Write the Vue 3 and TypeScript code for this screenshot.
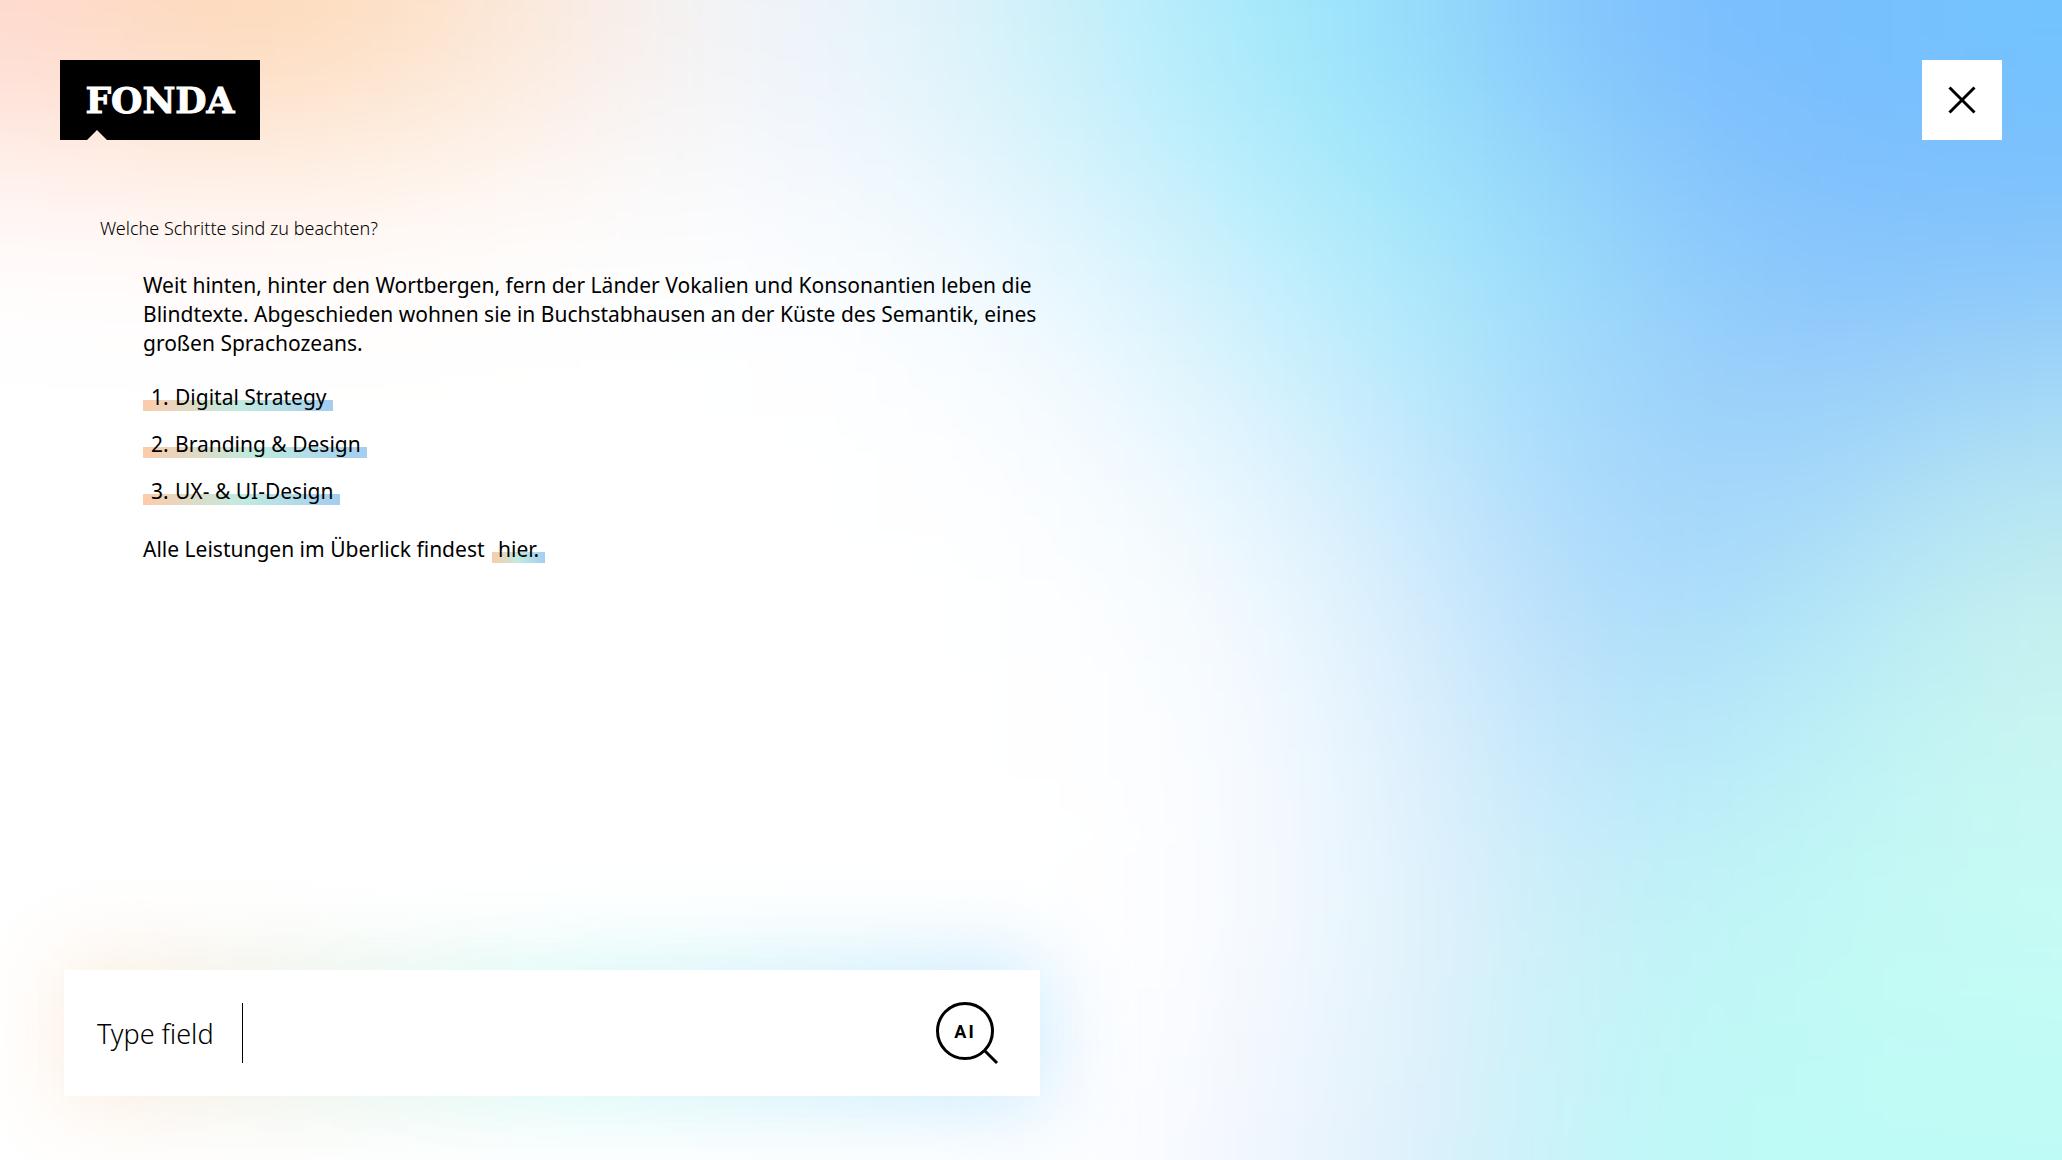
<script setup lang="ts">
import { ref } from 'vue'

const services: string[] = ['Digital Strategy', 'Branding & Design', 'UX- & UI-Design']
const query = ref<string>('')

// Colour field behind the page: one row of swatches per band, blurred together.
const w = 'ffffff'
const mesh: string[][] = [
  ['fed9cd', 'fdd8b8', 'fddbbb', 'fce3cd', 'fbebe2', 'f2f3f7', 'ecf4fc', 'dcf2f9', 'c3f0fb', 'abeafb', '9ae5fb', '90d2fb', '81c2fd', '79bdfe', '76c0fe', '72c3fe'],
  ['fff8f7', 'fff5f3', 'fff6f2', 'fff9f6', 'fdfbfb', 'f9fbfe', 'f6fafe', 'ebf7fd', 'd8f3fd', 'bff0fc', 'a7ebfb', '9de1fb', '91d1fb', '86c3fc', '7fbffd', '7dbffd'],
  [w, w, w, w, w, w, 'fdfeff', 'f8fcff', 'ebf7fe', 'd3f1fd', 'bbeefc', 'a6e5fb', '9bd7fb', '92cbfb', '91cafb', '95cdf9'],
  [w, w, w, w, w, w, w, 'fdfeff', 'f7fbff', 'e6f6fe', 'cfedfd', 'b5e2fc', 'a5d6fb', '9ed2fa', 'a3d6f9', 'b0e1f5'],
  [w, w, w, w, w, w, w, w, 'fcfeff', 'f5fafe', 'e0f2fd', 'c4e5fc', 'abd9fb', 'a8dbfa', 'b6e6f7', 'c5efee'],
  [w, w, w, w, w, w, w, w, 'fefeff', 'f9fcff', 'e8f4fe', 'cfeafb', 'b7e2fa', 'b5e8f9', 'bff2f5', 'c9f5f1'],
  [w, w, w, w, w, w, w, w, w, 'fbfdff', 'ebf6fe', 'd5edfb', 'c0ebfa', 'bef2f7', 'c2f8f5', 'c8f9f3'],
  [w, w, w, w, w, w, w, w, w, 'fafbff', 'eaf5fd', 'd8f0fa', 'c5f2f8', 'c0f8f6', 'c2faf5', 'c5fbf5'],
  [w, w, w, w, w, w, w, w, 'fdfeff', 'f5f8ff', 'e7f2fd', 'd3effa', 'c0f6f8', 'bdfaf6', 'bffbf6', 'bffbf6'],
]
const last = { row: mesh.length - 1, col: 15 }
const swatches = Array.from({ length: 13 * 20 }, (_, i) => {
  const x = (i % 20) - 2
  const y = Math.floor(i / 20) - 2
  const row = Math.min(Math.max(y, 0), last.row)
  const col = Math.min(Math.max(x, 0), last.col)
  return { x, y, fill: '#' + mesh[row][col] }
})
</script>

<template>
  <div class="page">
    <svg class="backdrop" viewBox="0 0 16 9" preserveAspectRatio="none" aria-hidden="true">
      <defs>
        <filter id="melt" filterUnits="userSpaceOnUse" x="-2" y="-2" width="20" height="13" color-interpolation-filters="sRGB">
          <feGaussianBlur stdDeviation="0.68" />
        </filter>
      </defs>
      <g filter="url(#melt)">
        <rect v-for="s in swatches" :key="`${s.x}:${s.y}`" :x="s.x" :y="s.y" width="1.02" height="1.02" :fill="s.fill" />
      </g>
    </svg>

    <header class="top">
      <a class="logo" href="#">FONDA</a>
      <button class="close" type="button" aria-label="Schließen">
        <svg width="28" height="28" viewBox="0 0 28 28" aria-hidden="true">
          <path d="M1.5 1.5L26.5 26.5M26.5 1.5L1.5 26.5" stroke="#000" stroke-width="3" />
        </svg>
      </button>
    </header>

    <main class="chat">
      <p class="question">Welche Schritte sind zu beachten?</p>
      <div class="answer">
        <p>Weit hinten, hinter den Wortbergen, fern der Länder Vokalien und Konsonantien leben die Blindtexte. Abgeschieden wohnen sie in Buchstabhausen an der Küste des Semantik, eines großen Sprachozeans.</p>
        <ol class="services">
          <li v-for="(name, i) in services" :key="name">
            <span class="mark item"><span class="num">{{ i + 1 }}.</span>{{ name }}</span>
          </li>
        </ol>
        <p>Alle Leistungen im Überlick findest <a class="mark link" href="#">hier.</a></p>
      </div>
    </main>

    <form class="ask" @submit.prevent>
      <label for="query">Type field</label>
      <input id="query" v-model="query" type="text" autocomplete="off" />
      <button class="send" type="submit" aria-label="AI-Suche">
        <svg width="64" height="64" viewBox="0 0 64 64" aria-hidden="true">
          <circle cx="30" cy="30" r="27.5" fill="none" stroke="#000" stroke-width="3" />
          <path d="M49.5 49.5L62 62" stroke="#000" stroke-width="3" />
          <text x="30" y="37" text-anchor="middle">AI</text>
        </svg>
      </button>
    </form>
  </div>
</template>

<style>
body {
  margin: 0;
}
</style>

<style scoped>
.page {
  position: relative;
  isolation: isolate;
  display: flex;
  flex-direction: column;
  min-height: 100vh;
  box-sizing: border-box;
  padding: 60px 60px 64px;
  overflow: hidden;
  color: #000;
  font-family: "Noto Sans", "Open Sans", sans-serif;
}

.backdrop {
  position: absolute;
  inset: 0;
  z-index: -2;
  width: 100%;
  height: 100%;
}

.top {
  display: flex;
  justify-content: space-between;
}

.logo {
  display: flex;
  align-items: center;
  justify-content: center;
  width: 200px;
  height: 80px;
  background: #000;
  color: #fff;
  font: 700 36px/80px "DejaVu Serif", serif;
  -webkit-text-stroke: 1px #fff;
  text-decoration: none;
  clip-path: polygon(0 0, 100% 0, 100% 100%, 47px 100%, 37px 70px, 27px 100%, 0 100%);
}

.close {
  display: flex;
  align-items: center;
  justify-content: center;
  width: 80px;
  height: 80px;
  padding: 0;
  border: 0;
  background: #fff;
}

.chat {
  width: calc(50% + 20px);
  padding: 76px 0 76px 40px;
  box-sizing: border-box;
}

p {
  margin: 0;
}

.question {
  font-size: 18px;
  font-weight: 300;
  line-height: 24px;
}

.answer {
  margin: 31px 0 0 43px;
  font-size: 21px;
  line-height: 29px;
}

.services {
  display: flex;
  flex-direction: column;
  gap: 18px;
  margin: 25px 0 29px;
  padding: 0;
  list-style: none;
}

.mark {
  background: linear-gradient(90deg, #fccbab, #c0ebe0 50%, #a5cdf0) 0 100% / 100% 11px no-repeat;
  color: inherit;
  text-decoration: none;
}

.item {
  display: inline-block;
  padding: 0 6px 0 8px;
  background-position: 0 17px;
}

.num {
  display: inline-block;
  width: 24px;
}

.link {
  margin-left: 2px;
  padding: 0 6px;
}

.ask {
  position: relative;
  display: flex;
  align-items: center;
  width: calc(50% + 5px);
  height: 126px;
  margin: auto 0 0 4px;
  padding: 0 41px 0 33px;
  box-sizing: border-box;
  background: #fff;
}

.ask::before {
  content: "";
  position: absolute;
  inset: -12px -4px;
  z-index: -1;
  background: linear-gradient(90deg, #ffebdb, #d8faf6 50%, #c8e8ff);
  filter: blur(44px);
}

.ask label {
  font-size: 27px;
  font-weight: 300;
}

.ask input {
  flex: 1;
  min-width: 0;
  height: 60px;
  margin-left: 28px;
  padding: 0 16px;
  border: 0;
  border-left: 1px solid #000;
  background: transparent;
  font: inherit;
  font-size: 27px;
  outline: none;
}

.send {
  display: flex;
  padding: 0;
  border: 0;
  background: none;
}

.send text {
  font: 700 18px Roboto, sans-serif;
  letter-spacing: 2px;
}
</style>
